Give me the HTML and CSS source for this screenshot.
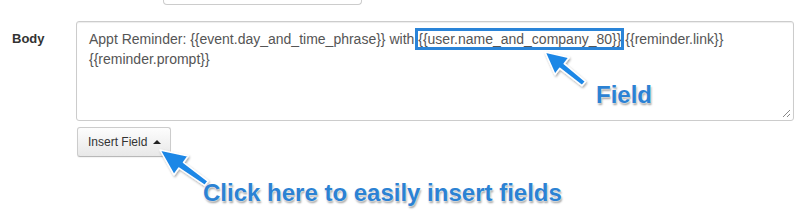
FILE: index.html
```html
<!DOCTYPE html>
<html lang="en">
  <head>
    <meta charset="UTF-8" />
    <meta name="viewport" content="width=device-width, initial-scale=1.0" />
    <title>Reminder Body</title>
    <link rel="stylesheet" href="styles.css">
  </head>
  <body>
    <div class="page">
      <div class="prev-input"></div>

      <div class="form-row">
        <label class="form-label">Body</label>
        <div class="field-col">
          <div class="textarea">
            Appt Reminder: {{event.day_and_time_phrase}} with <span class="token">{{user.name_and_company_80}}</span> {{reminder.link}}<br />
            {{reminder.prompt}}
            <svg class="grip" width="9" height="9" viewBox="0 0 9 9">
              <path d="M1 8 L8 1 M5 8 L8 5" stroke="#888" stroke-width="1" />
            </svg>
          </div>
          <button class="btn">Insert Field <span class="caret"></span></button>
        </div>
      </div>

      <!-- annotation arrows -->
      <svg class="arrows" width="801" height="223" viewBox="0 0 801 223">
        <defs>
          <filter id="shadow" x="-20%" y="-20%" width="140%" height="140%">
            <feDropShadow dx="1" dy="1.5" stdDeviation="1" flood-color="#000" flood-opacity="0.35" />
          </filter>
        </defs>
        <polygon
          points="545,52 569,57.5 564.2,63.7 585.5,81.5 582,85.6 559.8,68.3 555,74.5"
          fill="#1f87e6" stroke="#fff" stroke-width="1.5" stroke-linejoin="round" filter="url(#shadow)" />
        <polygon
          points="160,150 188.2,155.9 183.5,162.5 208,181.2 204.7,185.4 178.9,168 174,174.8"
          fill="#1f87e6" stroke="#fff" stroke-width="1.5" stroke-linejoin="round" filter="url(#shadow)" />
      </svg>

      <div class="note note-field">Field</div>
      <div class="note note-click">Click here to easily insert fields</div>
    </div>
  </body>
</html>
```

FILE: styles.css
```css
* {
  margin: 0;
  padding: 0;
  box-sizing: border-box;
}

body {
  background: #fff;
  font-family: "Liberation Sans", Arial, sans-serif;
  width: 801px;
  height: 223px;
  overflow: hidden;
}

.page {
  position: relative;
  width: 801px;
  height: 223px;
}

.prev-input {
  margin-left: 163px;
  width: 199px;
  height: 5px;
  border: 1px solid #ccc;
  border-top: none;
  border-radius: 0 0 4px 4px;
}

.form-row {
  display: flex;
  margin-top: 16px;
}

.form-label {
  width: 76px;
  padding: 10px 0 0 12px;
  font-size: 13px;
  font-weight: bold;
  color: #333;
}

.field-col {
  display: flex;
  flex-direction: column;
  align-items: flex-start;
}

.textarea {
  position: relative;
  width: 718px;
  height: 100px;
  padding: 7px 12px;
  border: 1px solid #ccc;
  border-radius: 3px;
  box-shadow: inset 0 1px 1px rgba(0, 0, 0, 0.075);
  font-size: 14px;
  line-height: 20px;
  color: #555;
}

.token {
  outline: 3px solid #2a84d8;
  outline-offset: 0;
}

.grip {
  position: absolute;
  right: 2px;
  bottom: 2px;
}

.btn {
  margin-top: 6px;
  margin-left: 1px;
  height: 30px;
  padding: 0 9px 0 10px;
  font-family: "Liberation Sans", Arial, sans-serif;
  font-size: 12px;
  color: #333;
  background: linear-gradient(#fdfdfd, #e8e8e8);
  border: 1px solid #ccc;
  border-bottom-color: #b8b8b8;
  border-radius: 3px;
  box-shadow: 0 1px 1px rgba(0, 0, 0, 0.05);
}

.caret {
  display: inline-block;
  width: 0;
  height: 0;
  margin-left: 2px;
  vertical-align: 2px;
  border-left: 4px solid transparent;
  border-right: 4px solid transparent;
  border-bottom: 4px solid #222;
}

.arrows {
  position: absolute;
  top: 0;
  left: 0;
  pointer-events: none;
}

.note {
  position: absolute;
  font-size: 24px;
  line-height: 28px;
  font-weight: bold;
  color: #2c82d3;
  white-space: nowrap;
  text-shadow: 0 0 2px #fff, 0 0 2px #fff, 1px 2px 2px rgba(0, 0, 0, 0.4);
}

.note-field {
  left: 596px;
  top: 81px;
}

.note-click {
  left: 203px;
  top: 179px;
}
```
